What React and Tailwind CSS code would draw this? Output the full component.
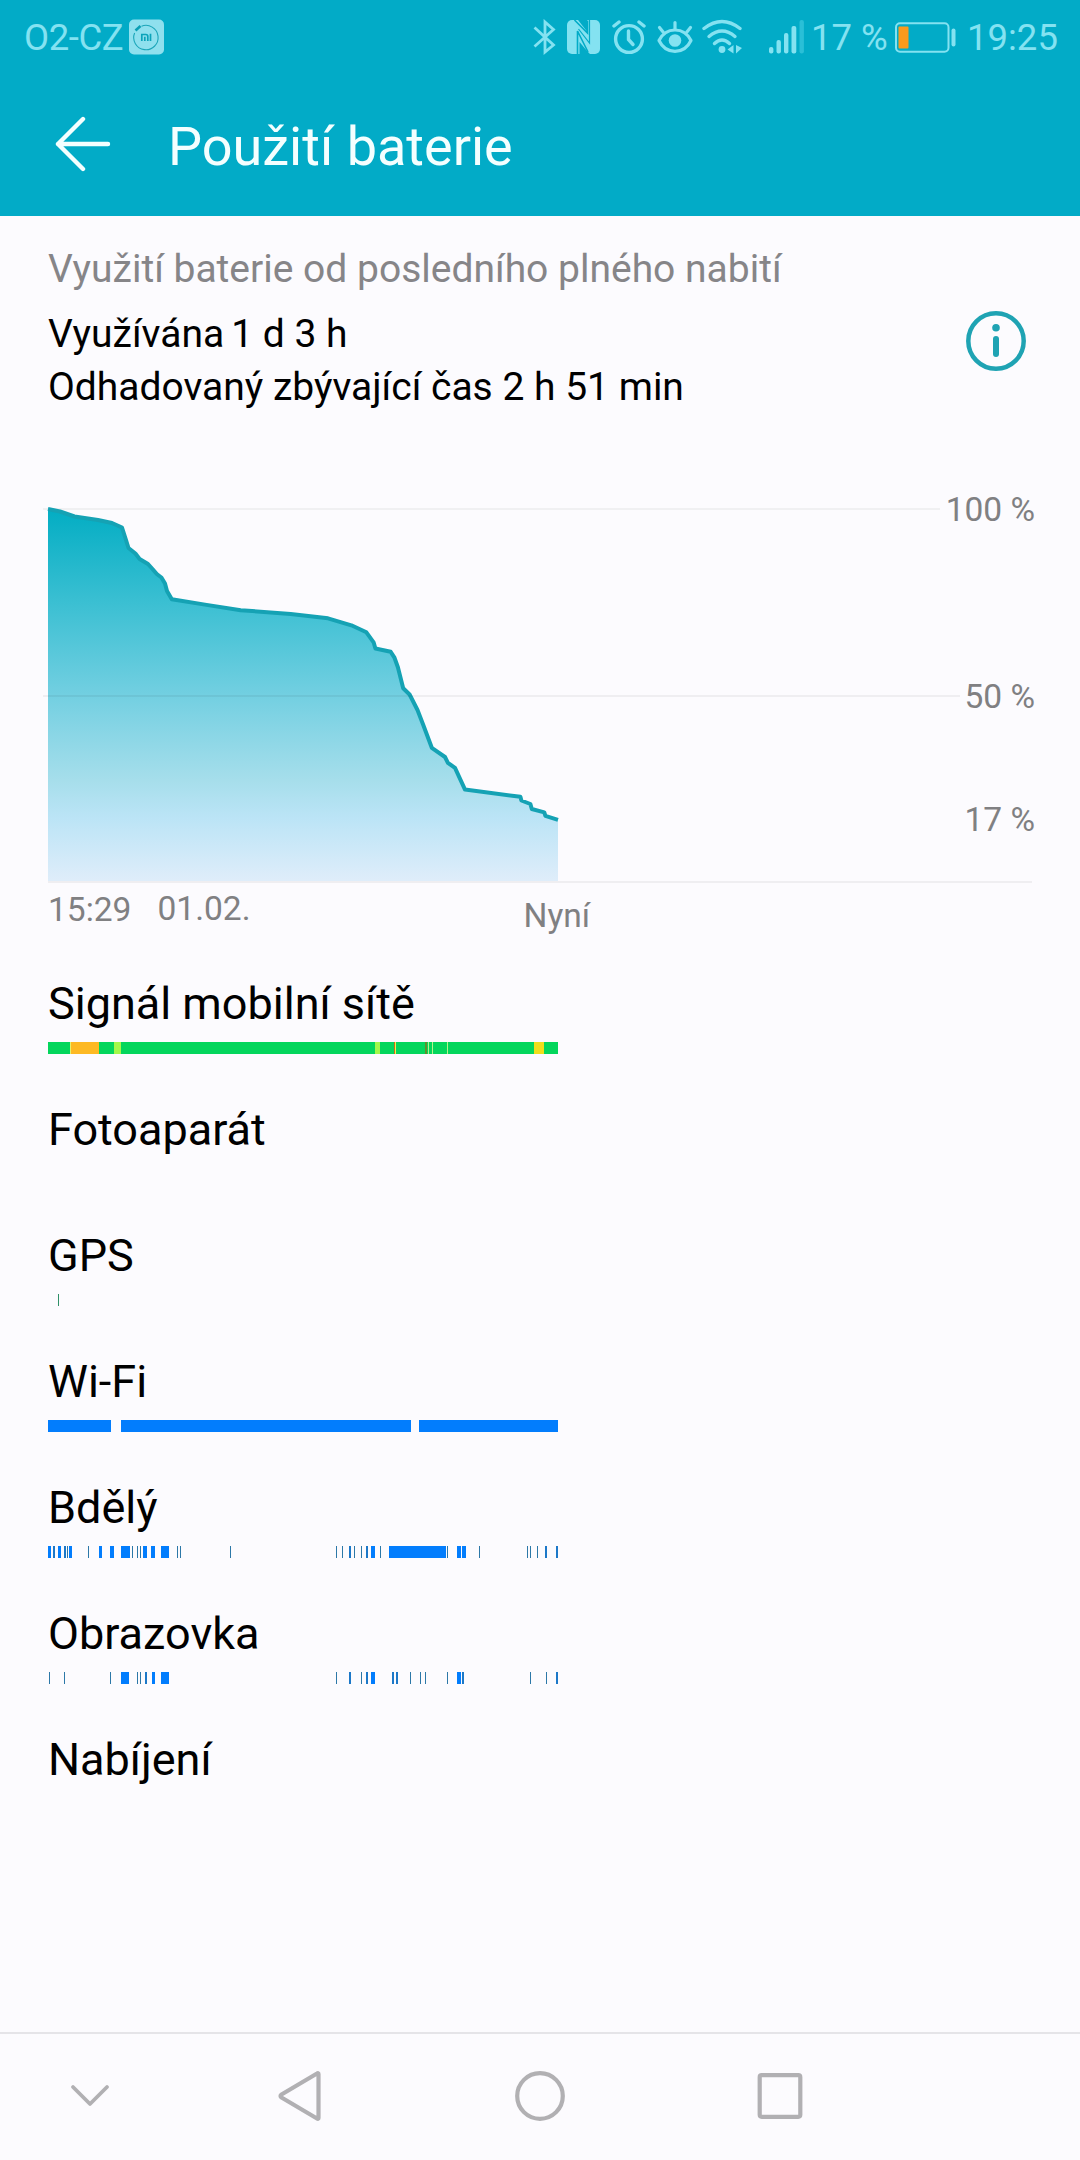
import React from 'react';

const CHART_POINTS = [
    [48, 19], [60, 21.5], [74.5, 26.5], [98, 30], [112, 33], [122, 37.5], [125.7, 49], [128.5, 58],
    [135.4, 63.5], [139.6, 69], [148, 74], [152.5, 79], [156.8, 84], [161.4, 87.5], [165, 93.5],
    [167, 101], [171.8, 109.3], [205, 114.6], [240.7, 120.2], [290.7, 124], [328, 128.3], [351.4, 135.3],
    [366.4, 142.3], [373.6, 152.3], [375.4, 158.5], [390.7, 161.8], [394.3, 167.3], [397.9, 177.3],
    [403.2, 198.3], [409.6, 204.5], [417.5, 220], [422.9, 234], [431.8, 257.8], [445, 267],
    [447.9, 272.8], [455, 277.8], [465, 299.6], [520.4, 306.8], [521.4, 310.5], [530.4, 314],
    [531.8, 319], [544.3, 322.4], [545.4, 325.8], [558, 329.8],
];

const GREEN = '#04d65c';
const BLUE = '#027dfd';
const THIN = '#2c78a8';

// [start, width, color?] measured from the left edge of the timeline
const ROWS = [
    {
        label: 'Signál mobilní sítě',
        color: GREEN,
        segments: [
            [0, 510], [22, 1, '#e6f26a'], [23, 28, '#fdb924'], [66, 7, '#a4f84a'], [327, 5, '#a4f84a'],
            [346, 1, '#c96a1c'], [347, 1, '#f3ef4c'], [377, 2, '#5f8f2c'], [380, 1, '#b6f58a'],
            [384, 1, '#b6f58a'], [399, 1, '#b6f58a'], [486, 10, '#f0de1c'],
        ],
    },
    { label: 'Fotoaparát', color: BLUE, segments: [] },
    { label: 'GPS', color: '#2f9068', segments: [[10, 1]] },
    { label: 'Wi-Fi', color: BLUE, segments: [[0, 63], [73, 290], [371, 139]] },
    {
        label: 'Bdělý',
        color: BLUE,
        segments: [
            [0, 3], [5, 2], [10, 3], [16, 2], [19, 1], [21, 3], [40, 1], [51, 3], [62, 4], [73, 9], [84, 1],
            [89, 1], [92, 1], [95, 4], [103, 4], [113, 8], [129, 1], [132, 1], [182, 1], [288, 1], [294, 1],
            [301, 2], [306, 1], [313, 1], [318, 2], [323, 4], [332, 1], [341, 57], [399, 1], [409, 4],
            [414, 4], [431, 1], [479, 1], [482, 1], [489, 1], [497, 2], [508, 2],
        ],
    },
    {
        label: 'Obrazovka',
        color: BLUE,
        segments: [
            [1, 1], [16, 1], [62, 1], [73, 8], [89, 1], [92, 1], [97, 2], [104, 3], [113, 8], [288, 1],
            [301, 2], [313, 1], [318, 2], [323, 4], [344, 2], [348, 2], [362, 1], [372, 1], [377, 1],
            [399, 1], [409, 4], [414, 2], [482, 1], [498, 1], [508, 2],
        ],
    },
    { label: 'Nabíjení', color: BLUE, segments: [] },
];

function segmentColor(width, rowColor) {
    if (rowColor !== BLUE) return rowColor;
    if (width === 1) return THIN;
    return width === 2 ? '#1c78c8' : BLUE;
}

function MiBadge() {
    return (
        <svg width="35" height="36" viewBox="0 0 35 36" fill="none">
            <rect y="0.5" width="35" height="35" rx="5" fill="#8fe0ee" />
            <path d="M12.5 7.2A12.2 12.2 0 1 1 5.6 14" stroke="#1ba5b9" strokeWidth="1.1" />
            <path d="M6.5 11.5L11.5 7" stroke="#0a9fb5" strokeWidth="2.6" />
            <path d="M12.8 22V15.5H16.8Q18.8 15.5 18.8 17.5V22M15.8 17.8V22M21.5 14.8V22" stroke="#0ba3ba" strokeWidth="1.7" />
        </svg>
    );
}

function BluetoothIcon() {
    return (
        <svg className="ml-auto" width="23" height="36" viewBox="0 0 23 36" fill="none" stroke="#84e2f1" strokeWidth="2.8">
            <path d="M1.5 8.5L20.5 26L12 33V3L20.5 10.500L1.5 27.5" />
        </svg>
    );
}

function NfcIcon() {
    return (
        <svg className="ml-[11px]" width="33" height="36" viewBox="0 0 33 36">
            <rect y="1" width="33" height="34" rx="5" fill="#84e2f1" />
            <path d="M7.500 1L20.500 14V1.500" fill="none" stroke="#02abc7" strokeWidth="1.6" />
            <path d="M11 1H20V12.500Z" fill="#02abc7" />
            <path d="M10.500 35V12L21 33" fill="none" stroke="#02abc7" strokeWidth="1.6" />
            <path d="M12.500 35V23L20.500 32.500L23 35Z" fill="#02abc7" />
            <path d="M22.500 1V24L11.500 10" fill="none" stroke="#02abc7" strokeWidth="1.2" />
        </svg>
    );
}

function AlarmIcon() {
    return (
        <svg className="ml-3" width="34" height="36" viewBox="0 0 34 36" fill="none" stroke="#84e2f1" strokeWidth="3.4" strokeLinecap="round">
            <circle cx="17" cy="20" r="13.4" />
            <path d="M2 7L7 3M32 7L27 3" />
            <path d="M16.5 12V20.5L21 25.5" strokeWidth="3.4" />
        </svg>
    );
}

function EyeIcon() {
    return (
        <svg className="ml-[11px]" width="36" height="36" viewBox="0 0 36 36" fill="none" stroke="#84e2f1" strokeWidth="3.2" strokeLinecap="round">
            <path d="M2 21.5C9 7.500 27 7.500 34 21.5C27 36 9 36 2 21.5Z" strokeLinejoin="round" />
            <path d="M18 10V3.500M6.500 13.500L2.500 8.500M29.500 13.500L33.500 8.500" />
            <circle cx="18" cy="21.5" r="6.300" fill="#84e2f1" stroke="none" />
        </svg>
    );
}

function WifiIcon() {
    return (
        <svg className="ml-[9px]" width="41" height="36" viewBox="0 0 41 36" fill="none" stroke="#84e2f1" strokeWidth="3.4" strokeLinecap="round">
            <path d="M2 9.5Q20 -4.5 38 9.5" />
            <path d="M7 17.5Q20 6.5 33 17.5" />
            <path d="M12.5 24.5Q20 17.5 27.5 24.5" />
            <circle cx="20" cy="30.5" r="3.4" fill="#84e2f1" stroke="none" />
            <path d="M31.5 26V34.500L25.5 30.500ZM34 26V34.500L40 29Z" fill="#84e2f1" stroke="none" />
        </svg>
    );
}

function SignalIcon() {
    return (
        <svg className="ml-[26px]" width="35" height="36" viewBox="0 0 35 36" fill="#84e2f1">
            <rect x="0" y="28" width="4.4" height="6.5" rx="2" />
            <rect x="7.5" y="21" width="4.4" height="13.5" rx="2" />
            <rect x="15" y="14" width="4.4" height="20.5" rx="2" />
            <rect x="22.5" y="7" width="4.8" height="27.5" rx="2" />
            <rect x="30.5" y="1" width="4.4" height="33.5" rx="2" fill="#2abfd7" />
        </svg>
    );
}

function BatteryIcon() {
    return (
        <svg className="ml-[10px]" width="61" height="31" viewBox="0 0 61 31" fill="none">
            <rect x="1" y="1.2" width="52.5" height="28.6" rx="4" stroke="#84e2f1" strokeWidth="2" />
            <rect x="3.5" y="4.5" width="10" height="22" rx="1" fill="#fa9a1c" />
            <rect x="56.5" y="6.5" width="4" height="18" rx="2" fill="#84e2f1" />
        </svg>
    );
}

function StatusBar() {
    return (
        <div className="flex h-[74px] items-center px-6 text-[36.5px] leading-[44px] text-[#84e2f1]">
            <span className="w-[105px] pt-0.5 tracking-[-0.4px] whitespace-nowrap">O2-CZ</span>
            <MiBadge />
            <BluetoothIcon />
            <NfcIcon />
            <AlarmIcon />
            <EyeIcon />
            <WifiIcon />
            <SignalIcon />
            <span className="ml-[7px] w-[74px] pt-0.5 whitespace-nowrap">17 %</span>
            <BatteryIcon />
            <span className="ml-[11px] w-[89px] pt-0.5 whitespace-nowrap">19:25</span>
        </div>
    );
}

function Chart() {
    const line = CHART_POINTS.map(p => p.join(',')).join(' ');
    return (
        <svg className="mt-[76px] block h-[488px] w-full" viewBox="0 0 1080 488">
            <defs>
                <linearGradient id="level" x1="0" y1="18" x2="0" y2="391" gradientUnits="userSpaceOnUse">
                    <stop offset="0" stopColor="#02adc3" />
                    <stop offset="0.25" stopColor="#3abfd2" />
                    <stop offset="0.5" stopColor="#72cfe1" />
                    <stop offset="0.73" stopColor="#a6deeb" />
                    <stop offset="0.83" stopColor="#bbe4f6" />
                    <stop offset="1" stopColor="#dfedfa" />
                </linearGradient>
            </defs>
            <path d="M43 19H940" stroke="#f0f0f2" strokeWidth="2" />
            <polygon points={`48,391 ${line} 558,391`} fill="url(#level)" />
            <polyline points={line} fill="none" stroke="#15a2b4" strokeWidth="4" strokeLinejoin="round" />
            <path d="M43 206H960M48 392H1032" stroke="#000" strokeOpacity="0.05" strokeWidth="2" />
            <g fill="#808082" fontSize="33.5">
                <text x="1035" y="31" textAnchor="end">100 %</text>
                <text x="1035" y="218" textAnchor="end">50 %</text>
                <text x="1035" y="341" textAnchor="end">17 %</text>
                <text x="48" y="431">15:29</text>
                <text x="157.5" y="430">01.02.</text>
                <text x="523.5" y="437">Nyní</text>
            </g>
        </svg>
    );
}

function TimelineRow({ label, color, segments }) {
    return (
        <div className="h-[126px]">
            <div className="h-[52px] text-[45px] leading-[52px] text-black">{label}</div>
            <svg className="mt-3 block" width="510" height="12" shapeRendering="crispEdges">
                {segments.map(([x, w, c]) => (
                    <rect key={x} x={x} y="0" width={w} height="12" fill={c || segmentColor(w, color)} />
                ))}
            </svg>
        </div>
    );
}

function NavBar() {
    return (
        <div className="h-[128px] border-t-2 border-[#e5e4e8]">
            <svg className="block" width="1080" height="126" viewBox="0 0 1080 126" fill="none" stroke="#b1b0b3" strokeWidth="4.2" strokeLinejoin="round" strokeLinecap="round">
                <path d="M73 53L90 70L107 53" strokeWidth="3.8" />
                <path d="M318.5 40V84Q318.5 85.5 317 84.5L281.5 63.5Q279.5 62 281.5 60.5L317 39.5Q318.5 38.5 318.5 40Z" />
                <circle cx="540" cy="62" r="22.8" />
                <rect x="759.7" y="41.2" width="40.6" height="41.6" rx="2" />
            </svg>
        </div>
    );
}

export default function App() {
    return (
        <div className="flex h-[2160px] w-[1080px] flex-col overflow-hidden bg-[#fcfbfe] font-['Roboto',sans-serif]">
            <header className="h-[216px] bg-[#02abc7]">
                <StatusBar />
                <div className="flex h-[142px] items-center pl-[54px]">
                    <svg width="58" height="58" viewBox="0 0 58 58" fill="none" stroke="#f4ffff" strokeWidth="4.4" strokeLinecap="round" strokeLinejoin="round">
                        <path d="M29 3L4 28L29 53M4 28H54" />
                    </svg>
                    <h1 className="ml-14 pt-[3px] text-[54px] leading-[64px] text-[#f4ffff]">Použití baterie</h1>
                </div>
            </header>

            <main className="flex-1">
                <div className="px-12 pt-[27px] text-[39px] leading-[53px]">
                    <h2 className="text-[#868588]">Využití baterie od posledního plného nabití</h2>
                    <div className="mt-3 flex items-start justify-between text-black">
                        <div>
                            <p className="flex gap-[7px]"><span>Využívána</span><span>1 d 3 h</span></p>
                            <p>Odhadovaný zbývající čas 2 h 51 min</p>
                        </div>
                        <svg className="mt-[3px] mr-[6px]" width="60" height="60" viewBox="0 0 60 60" fill="none">
                            <circle cx="30" cy="30" r="27.7" stroke="#1fa3b3" strokeWidth="4.5" />
                            <circle cx="30" cy="16.7" r="3.8" fill="#1fa3b3" />
                            <rect x="27" y="25" width="6" height="21" rx="3" fill="#1fa3b3" />
                        </svg>
                    </div>
                </div>
                <Chart />
                <div className="px-12">
                    {ROWS.map(row => <TimelineRow key={row.label} {...row} />)}
                </div>
            </main>

            <NavBar />
        </div>
    );
}
